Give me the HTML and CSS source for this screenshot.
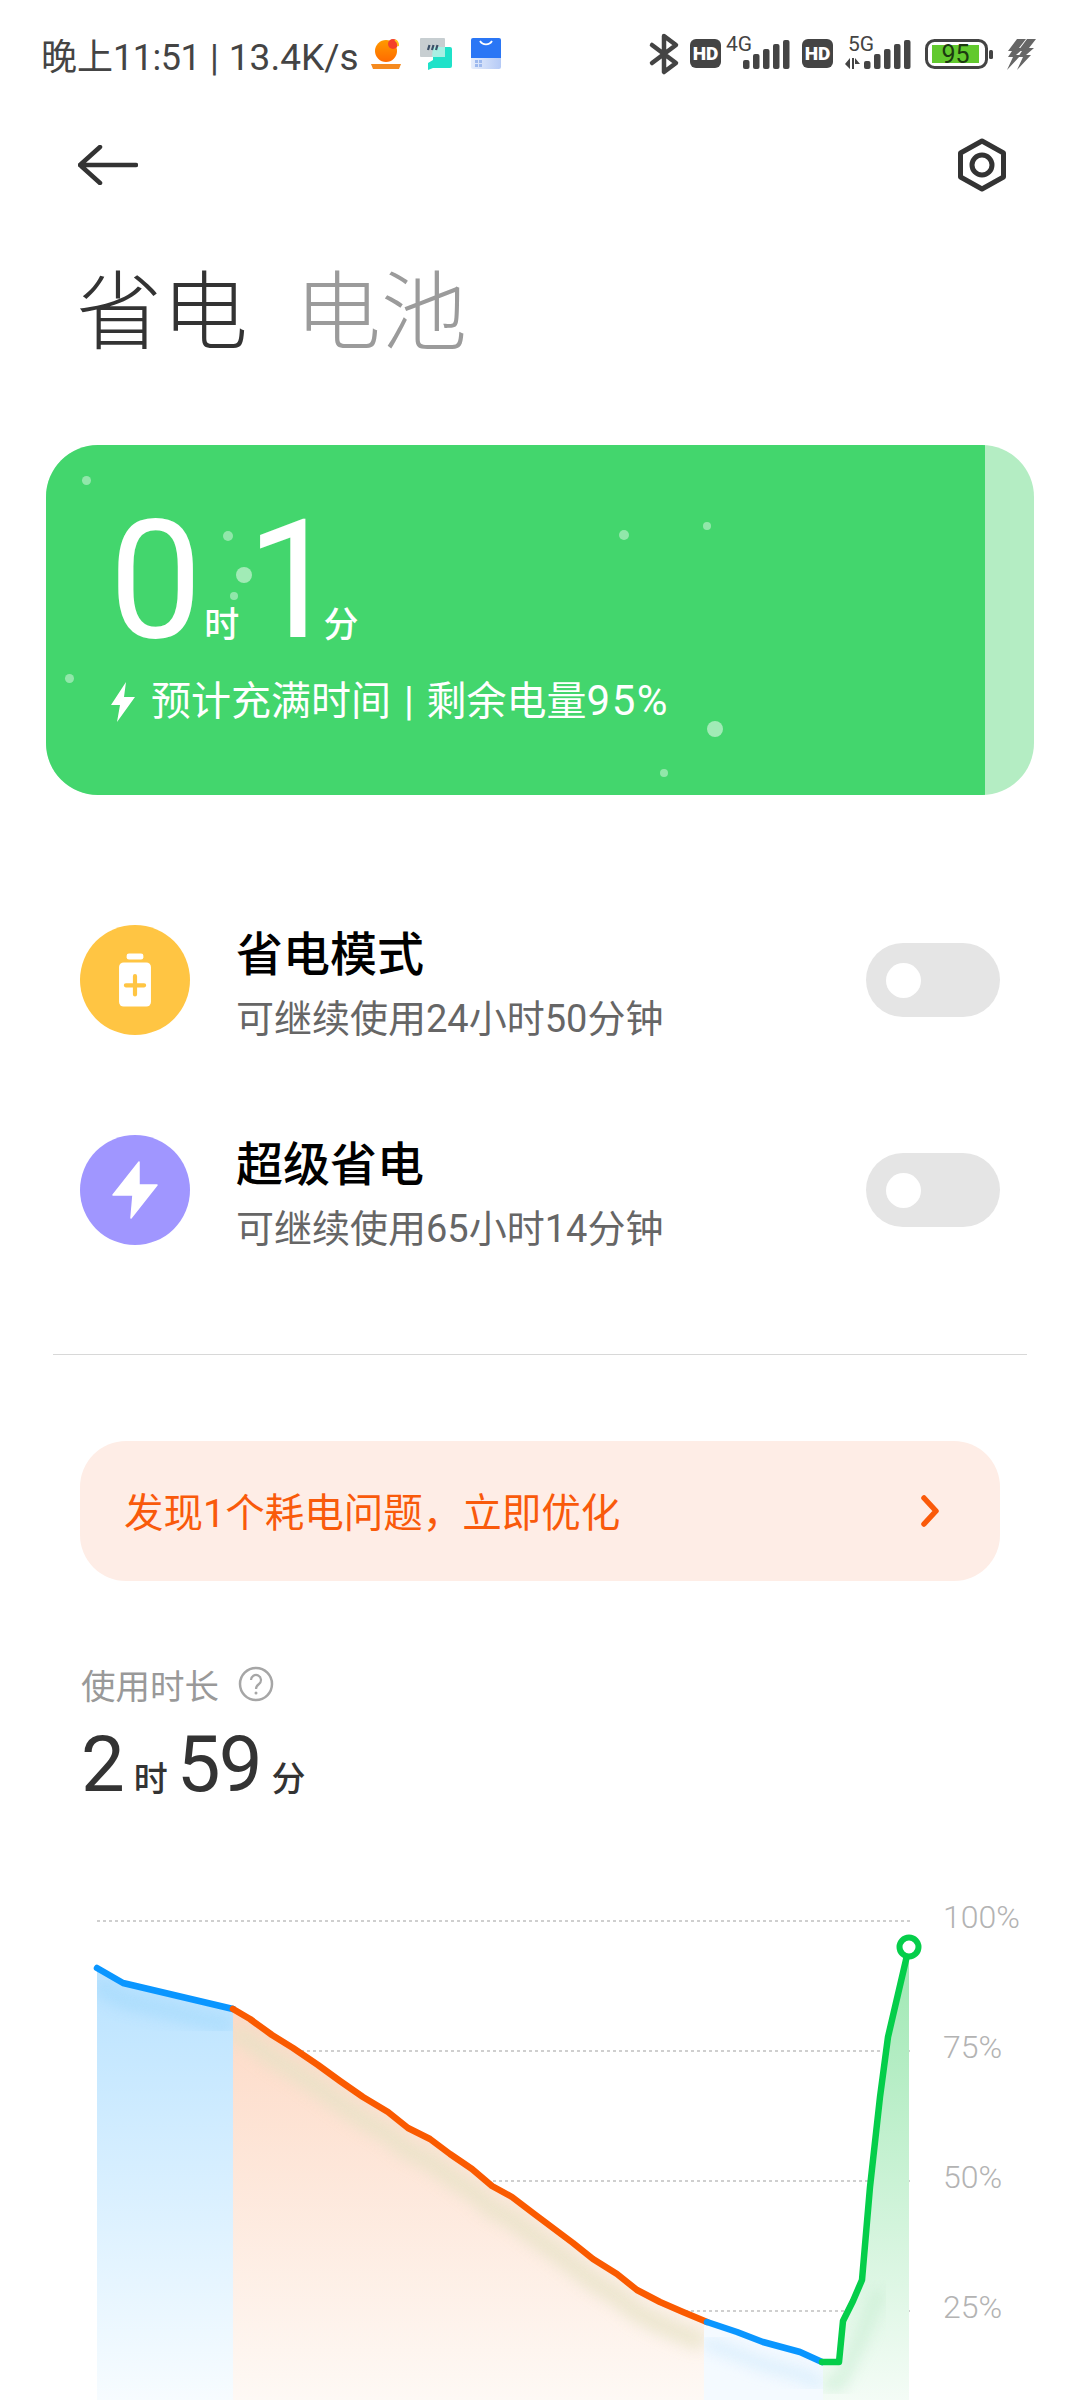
FILE: index.html
```html
<!DOCTYPE html>
<html lang="zh-CN">
<head>
<meta charset="utf-8">
<title>省电</title>
<link rel="stylesheet" href="styles.css">
</head>
<body>
<div class="page">
  <header class="status">
    <span class="clock">晚上<span class="tight">11:51</span> | <span class="wide">13.4K/s</span></span>
    <svg class="note n1" viewBox="371 38 30 32">
      <defs><linearGradient id="og" x1="0" y1="0" x2="0" y2="1"><stop offset="0" stop-color="#ff9a00"/><stop offset="1" stop-color="#ff6a00"/></linearGradient></defs>
      <circle cx="386" cy="51" r="11" fill="url(#og)"/>
      <circle cx="393" cy="44" r="5" fill="#f4402a"/>
      <path d="M395 40a6 6 0 0 1 3 6" fill="none" stroke="#ffc21a" stroke-width="2"/>
      <path d="M371 64h30l-2 5h-26z" fill="#f58a1f"/>
    </svg>
    <svg class="note n2" viewBox="420 38 32 32">
      <path d="M433 47h17a2 2 0 0 1 2 2v17a2 2 0 0 1-2 2h-17l-5 2v-7l5-3z" fill="#1fe2c9"/>
      <rect x="420" y="38" width="25" height="19" rx="1" fill="#c7ced1"/>
      <path d="M433 47h12v10h-13z" fill="#a9efe3"/>
      <path d="M428 50l1.500-5M432 50l1.500-5M436 50l1.500-5" stroke="#3b5068" stroke-width="2.200"/>
    </svg>
    <svg class="note n3" viewBox="471 38 30 32">
      <defs><linearGradient id="sg" x1="0" y1="0" x2="1" y2="0"><stop offset="0" stop-color="#e6eefc"/><stop offset="1" stop-color="#b5caf6"/></linearGradient></defs>
      <path d="M473 38h26a2 2 0 0 1 2 2v18h-30v-18a2 2 0 0 1 2-2z" fill="#2a76f5"/>
      <path d="M471 58h30v9a2 2 0 0 1-2 2h-26a2 2 0 0 1-2-2z" fill="url(#sg)"/>
      <path d="M480 41a7 7 0 0 0 12 0" fill="none" stroke="#fff" stroke-width="1.800"/>
      <path d="M475 60h3v3h-3zM479 60h3v3h-3zM475 64h3v3h-3zM479 64h3v3h-3z" fill="#9db9ee"/>
    </svg>
    <svg class="sys" viewBox="640 30 400 48">
      <path d="M652 45l24 18-12 9V36l12 9-24 18" fill="none" stroke="#444" stroke-width="4.500" stroke-linecap="round" stroke-linejoin="round"/>
      <rect x="690" y="39" width="31" height="29" rx="6" fill="#444"/>
      <text class="hd" x="705.500" y="60">HD</text>
      <text class="gen" x="726" y="51">4G</text>
      <g fill="#444">
        <rect x="743" y="60" width="6.500" height="9" rx="2"/><rect x="753" y="54" width="6.500" height="15" rx="2"/><rect x="763" y="49" width="6.500" height="20" rx="2"/><rect x="773" y="44" width="6.500" height="25" rx="2"/><rect x="783" y="40" width="6.500" height="29" rx="2"/>
      </g>
      <rect x="802" y="39" width="31" height="29" rx="6" fill="#444"/>
      <text class="hd" x="817.500" y="60">HD</text>
      <text class="gen" x="848" y="51">5G</text>
      <g fill="#444">
        <path d="M845 64l5-6v11zM852 58h2v11h-2zM855 58l5 6h-5z"/>
        <rect x="864" y="61" width="6.500" height="8" rx="2"/><rect x="874" y="54" width="6.500" height="15" rx="2"/><rect x="884" y="49" width="6.500" height="20" rx="2"/><rect x="894" y="44" width="6.500" height="25" rx="2"/><rect x="904" y="40" width="6.500" height="29" rx="2"/>
      </g>
      <rect x="926.500" y="40.500" width="60" height="27" rx="8" fill="none" stroke="#444" stroke-width="3"/>
      <rect x="932" y="45" width="47" height="18" fill="#62c92e"/>
      <text class="batt" x="955.500" y="63">95</text>
      <rect x="989" y="50" width="4" height="9" rx="1.500" fill="#444"/>
      <g fill="#666">
        <path d="M1017 39h9l-7 9h5l-8 7h5l-14 15 6-13h-5l4-6h-4z"/>
        <path d="M1027 39h9l-7 9h5l-8 7h5l-14 15 6-13h-5l4-6h-4z"/>
      </g>
    </svg>
  </header>

  <nav class="nav">
    <svg class="back" viewBox="0 0 60 40"><path d="M2 20h56M22 2L2 20l20 18" fill="none" stroke="#333" stroke-width="4.500" stroke-linecap="round" stroke-linejoin="round"/></svg>
    <svg class="gear" viewBox="0 0 50 54"><path d="M25 3l21.500 12v24L25 51 3.500 39V15z" fill="none" stroke="#333" stroke-width="5" stroke-linejoin="round"/><circle cx="25" cy="27" r="10" fill="none" stroke="#333" stroke-width="5"/></svg>
  </nav>

  <div class="tabs">
    <span class="tab tab-on">省电</span>
    <span class="tab">电池</span>
  </div>

  <section class="card">
    <div class="card-fill">
      <i class="dot d1"></i><i class="dot d2"></i><i class="dot d3"></i><i class="dot d4"></i><i class="dot d5"></i><i class="dot d6"></i><i class="dot d7"></i><i class="dot d8"></i><i class="dot d9"></i>
      <div class="time">
        <span class="big">0</span><span class="unit">时</span><span class="big big-one">1</span><span class="unit unit-m">分</span>
      </div>
      <div class="eta">
        <svg class="eta-bolt" viewBox="0 0 26 40"><path d="M16 0L1 23h9L7 40l18-25H14z" fill="#fff"/></svg>
        <span>预计充满时间 | 剩余电量<span class="eta-num">95%</span></span>
      </div>
    </div>
  </section>

  <section class="modes">
    <div class="mode">
      <span class="badge badge-y">
        <svg viewBox="0 0 50 70" class="badge-svg"><rect x="14" y="0" width="22" height="8" rx="3" fill="#fff"/><rect x="4" y="12" width="42" height="58" rx="6" fill="#fff"/><path d="M25 30v24M13 42h24" stroke="#ffc543" stroke-width="5.500" stroke-linecap="round"/></svg>
      </span>
      <div class="mode-text">
        <div class="mode-title">省电模式</div>
        <div class="mode-sub">可继续使用24小时50分钟</div>
      </div>
      <span class="toggle"><i class="knob"></i></span>
    </div>
    <div class="mode">
      <span class="badge badge-p">
        <svg viewBox="-1 -1 46 58" class="badge-svg bolt"><path d="M26 0L0 33h16l4 0-2 23 26-33H26z" fill="#fff" stroke="#fff" stroke-width="1.500" stroke-linejoin="round"/></svg>
      </span>
      <div class="mode-text">
        <div class="mode-title">超级省电</div>
        <div class="mode-sub">可继续使用65小时14分钟</div>
      </div>
      <span class="toggle"><i class="knob"></i></span>
    </div>
  </section>

  <hr class="rule">

  <a class="alert">
    <span class="alert-text">发现1个耗电问题，立即优化</span>
    <svg class="chev" viewBox="0 0 20 34"><path d="M4 4l12 13L4 30" fill="none" stroke="#fa5a0a" stroke-width="5.500" stroke-linecap="round" stroke-linejoin="round"/></svg>
  </a>

  <div class="usage-head">
    <span>使用时长</span>
    <svg class="help" viewBox="0 0 36 36"><circle cx="18" cy="18" r="16" fill="none" stroke="#a6a6a6" stroke-width="2.500"/><path d="M13 14a5 5 0 1 1 8 4c-2 1.500-3 2.500-3 5" fill="none" stroke="#a6a6a6" stroke-width="2.200"/><circle cx="18" cy="27" r="1.500" fill="#a6a6a6"/></svg>
  </div>
  <div class="usage">
    <span class="num">2</span><span class="u">时</span><span class="num">59</span><span class="u">分</span>
  </div>

  <svg class="chart" viewBox="0 1880 1080 520">
    <defs>
      <linearGradient id="fb" gradientUnits="userSpaceOnUse" x1="0" y1="1960" x2="0" y2="2400"><stop offset="0" stop-color="#b8e2ff"/><stop offset="1" stop-color="#f7fcff"/></linearGradient>
      <linearGradient id="fo" gradientUnits="userSpaceOnUse" x1="0" y1="2000" x2="0" y2="2400"><stop offset="0" stop-color="#fdd9c5"/><stop offset="1" stop-color="#fef9f5"/></linearGradient>
      <linearGradient id="fg" gradientUnits="userSpaceOnUse" x1="0" y1="1960" x2="0" y2="2400"><stop offset="0" stop-color="#a0e8b4"/><stop offset="1" stop-color="#f4fcf6"/></linearGradient>
      <filter id="blur" x="-10%" y="-10%" width="120%" height="120%"><feGaussianBlur stdDeviation="7"/></filter>
      <clipPath id="cp-o"><path d="M233 2009L250 2019 272 2035 293 2048 318 2065 340 2081 363 2097 388 2112 408 2128 430 2139 450 2154 472 2169 492 2186 512 2197 533 2213 573 2243 593 2259 617 2274 637 2290 660 2302 683 2312 704 2320V2400H233z"/></clipPath>
      <clipPath id="cp-b"><path d="M97 1968L123 1983 233 2009V2400H97z"/></clipPath>
      <clipPath id="cp-b2"><path d="M704 2320L737 2332 763 2342 800 2352 823 2362V2400H704z"/></clipPath>
      <clipPath id="cp-g"><path d="M823 2362H839L843 2321 853 2301 862 2280 870 2187 880 2097 888 2037 909 1947V2400H823z"/></clipPath>
    </defs>

    <g class="grid">
      <path d="M97 1921H913M97 2051H913M97 2181H913M97 2311H913"/>
    </g>

    <path d="M97 1968L123 1983 233 2009V2400H97z" fill="url(#fb)"/>
    <path d="M233 2009L250 2019 272 2035 293 2048 318 2065 340 2081 363 2097 388 2112 408 2128 430 2139 450 2154 472 2169 492 2186 512 2197 533 2213 573 2243 593 2259 617 2274 637 2290 660 2302 683 2312 704 2320V2400H233z" fill="url(#fo)"/>
    <path d="M704 2320L737 2332 763 2342 800 2352 823 2362V2400H704z" fill="#f4faff"/>
    <path d="M823 2362H839L843 2321 853 2301 862 2280 870 2187 880 2097 888 2037 909 1947V2400H823z" fill="url(#fg)"/>

    <g clip-path="url(#cp-b)"><path d="M97 1985L123 2000 233 2026" fill="none" stroke="#9ad6fb" stroke-width="18" opacity=".45" filter="url(#blur)"/></g>
    <g clip-path="url(#cp-o)"><path d="M233 2031L250 2041 272 2057 293 2070 318 2087 340 2103 363 2119 388 2134 408 2150 430 2161 450 2176 472 2191 492 2208 512 2219 533 2235 573 2265 593 2281 617 2296 637 2312 660 2324 683 2334 704 2342" fill="none" stroke="#e6e2c6" stroke-width="20" opacity=".7" filter="url(#blur)"/></g>
    <g clip-path="url(#cp-b2)"><path d="M704 2342L737 2354 763 2364 800 2374 823 2384" fill="none" stroke="#d5ecfc" stroke-width="14" opacity=".7" filter="url(#blur)"/></g>
    <g clip-path="url(#cp-g)"><path d="M823 2384H839L860 2340 880 2290" fill="none" stroke="#c6ecd0" stroke-width="14" opacity=".6" filter="url(#blur)"/></g>

    <g class="line">
      <path stroke="#0a96ff" d="M97 1968L123 1983 233 2009"/>
      <path stroke="#fa5a00" d="M233 2009L250 2019 272 2035 293 2048 318 2065 340 2081 363 2097 388 2112 408 2128 430 2139 450 2154 472 2169 492 2186 512 2197 533 2213 573 2243 593 2259 617 2274 637 2290 660 2302 683 2312 707 2322"/>
      <path stroke="#0a96ff" d="M707 2322L737 2332 763 2342 800 2352 822 2362"/>
      <path stroke="#05ce4a" d="M822 2362H839L843 2321 853 2301 862 2280 870 2187 880 2097 888 2037 909 1947"/>
    </g>
    <circle cx="909" cy="1947" r="9.500" fill="#fff" stroke="#05ce4a" stroke-width="6"/>

    <text class="pct" x="943" y="1928">100%</text>
    <text class="pct" x="943" y="2058">75%</text>
    <text class="pct" x="943" y="2188">50%</text>
    <text class="pct" x="943" y="2318">25%</text>
  </svg>
</div>
</body>
</html>
```

FILE: styles.css
```css
* { box-sizing: border-box; }
html, body { margin: 0; padding: 0; background: #fff; }
body { font-family: Roboto, "Noto Sans CJK SC", sans-serif; }
.page { width: 1080px; height: 2400px; overflow: hidden; }

.status { height: 108px; display: flex; align-items: center; padding-left: 41px; }
.clock { font-size: 36px; color: #444; white-space: nowrap; width: 330px; word-spacing: 1px; }
.tight { letter-spacing: -.5px; }
.wide { font-size: 37px; }
.note { height: 32px; flex: none; }
.n1 { width: 30px; }
.n2 { width: 32px; margin-left: 19px; }
.n3 { width: 30px; margin-left: 19px; }
.sys { width: 400px; height: 48px; margin-left: 139px; flex: none; }
.sys text { font-family: Roboto, sans-serif; }
.hd { font-size: 19px; font-weight: 900; fill: #fff; text-anchor: middle; }
.gen { font-size: 21px; fill: #444; }
.batt { font-size: 25px; fill: #1c3a10; text-anchor: middle; }

.nav { height: 114px; display: flex; align-items: center; justify-content: space-between; padding: 0 73px 0 78px; }
.back { width: 60px; height: 40px; }
.gear { width: 50px; height: 54px; }

.tabs { display: flex; gap: 47px; margin-top: 45px; padding-left: 76px; height: 93px; align-items: center; }
.tab { font-size: 86px; line-height: 93px; color: #9b9b9b; font-weight: 300; }
.tab-on { color: #333; }

.card { margin: 85px 46px 0; height: 350px; border-radius: 52px; background: #b4edc3; overflow: hidden; }
.card-fill { width: 939px; height: 100%; background: #43d66d; position: relative; padding: 61px 0 0 63px; color: #fff; }
.dot { position: absolute; border-radius: 50%; background: rgba(255,255,255,.42); }
.d1 { left: 36px; top: 31px; width: 9px; height: 9px; }
.d2 { left: 177px; top: 86px; width: 10px; height: 10px; }
.d3 { left: 190px; top: 122px; width: 16px; height: 16px; background: rgba(255,255,255,.5); }
.d4 { left: 184px; top: 147px; width: 8px; height: 8px; }
.d5 { left: 19px; top: 229px; width: 9px; height: 9px; }
.d6 { left: 573px; top: 85px; width: 10px; height: 10px; }
.d7 { left: 657px; top: 77px; width: 8px; height: 8px; }
.d8 { left: 661px; top: 276px; width: 16px; height: 16px; background: rgba(255,255,255,.5); }
.d9 { left: 614px; top: 324px; width: 8px; height: 8px; }
.time { display: flex; align-items: baseline; height: 150px; }
.big { font-size: 166px; line-height: 150px; font-weight: 400; letter-spacing: -4px; }
.big-one { margin-left: 7px; letter-spacing: -24px; }
.unit { font-size: 35px; font-weight: 500; margin-left: 6px; }
.unit-m { margin-left: 8px; }
.eta { display: flex; align-items: center; gap: 15px; margin-top: 15px; margin-left: 1px; font-size: 40px; line-height: 60px; white-space: nowrap; word-spacing: 3px; }
.eta-num { font-size: 42px; letter-spacing: 1.500px; }
.eta-bolt { width: 26px; height: 40px; }

.modes { margin-top: 80px; }
.mode { height: 210px; display: flex; align-items: center; padding: 0 80px; }
.badge { width: 110px; height: 110px; border-radius: 50%; display: flex; align-items: center; justify-content: center; flex: none; }
.badge-y { background: #ffc543; }
.badge-p { background: #a096ff; }
.badge-svg { width: 38px; height: 58px; }
.bolt { width: 46px; height: 58px; }
.mode-text { margin-left: 46px; flex: 1; padding-top: 8px; }
.mode-title { font-size: 47px; line-height: 60px; font-weight: 500; color: #000; }
.mode-sub { font-size: 38px; line-height: 50px; margin-top: 9px; color: #666; }
.toggle { width: 134px; height: 74px; border-radius: 37px; background: #e5e5e5; display: flex; align-items: center; padding-left: 20px; flex: none; }
.knob { width: 35px; height: 35px; border-radius: 50%; background: #fff; }

.rule { margin: 59px 53px 0; border: 0; height: 1px; background: #d8d8d8; }

.alert { margin: 86px 80px 0; height: 140px; border-radius: 46px; background: #feede6; display: flex; align-items: center; justify-content: space-between; padding: 0 60px 0 44px; color: #f95a0b; font-size: 39.500px; }
.alert-text { margin-bottom: 4px; }
.chev { width: 20px; height: 34px; }

.usage-head { display: flex; align-items: center; gap: 19px; margin: 78px 0 0 81px; height: 50px; font-size: 34.500px; color: #999; }
.help { width: 36px; height: 36px; }
.usage { display: flex; align-items: baseline; margin: 11px 0 0 81px; height: 90px; color: #333; }
.num { font-size: 78px; line-height: 90px; letter-spacing: -2px; }
.u { font-size: 34px; font-weight: 500; margin: 0 9px 0 11px; }

.chart { display: block; width: 1080px; height: 520px; margin-top: 70px; }
.grid path { fill: none; stroke: #cfcfcf; stroke-width: 2; stroke-dasharray: 3 3; }
.line path { fill: none; stroke-width: 6.500; stroke-linejoin: round; stroke-linecap: round; }
.pct { font-family: Roboto, sans-serif; font-size: 32px; font-weight: 300; fill: #b3b3b3; }
```
